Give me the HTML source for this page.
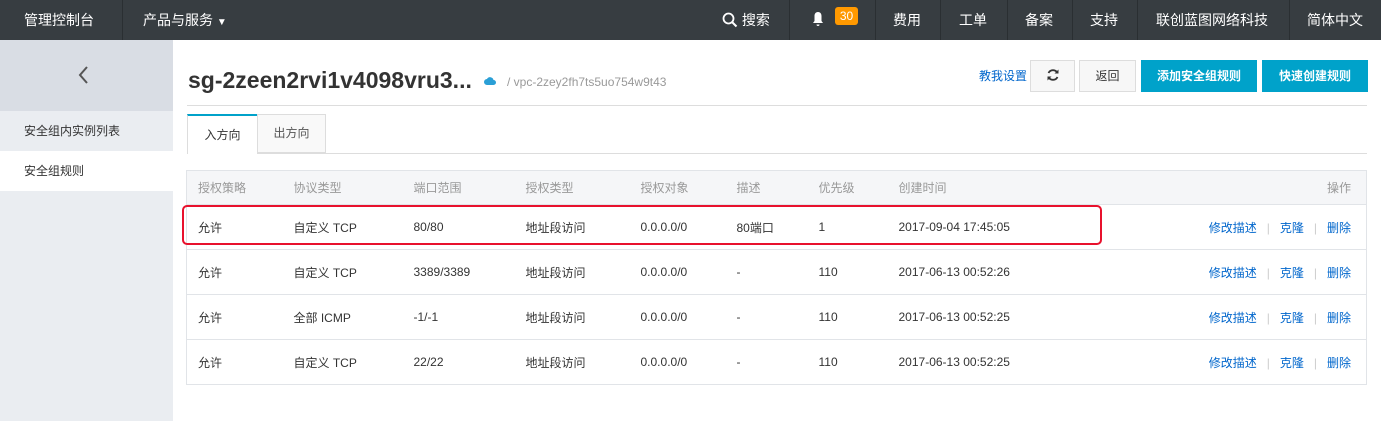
<!DOCTYPE html>
<html><head><meta charset="utf-8"><style>
*{margin:0;padding:0;box-sizing:border-box}
body{width:1381px;height:421px;overflow:hidden;background:#fff;font-family:"Liberation Sans","Noto Sans CJK SC",sans-serif;font-size:12px;color:#333;position:relative}
.nav{position:absolute;left:0;top:0;width:1381px;height:40px;background:#373d41;color:#fff;font-size:14px}
.nav span{position:absolute;top:0;line-height:40px;white-space:nowrap}
.sep{position:absolute;top:0;width:1px;height:40px;background:#2a2f32}
.side{position:absolute;left:0;top:40px;width:173px;height:381px;background:#eaedf1}
.abs{position:absolute;white-space:nowrap}
.btn{position:absolute;top:60px;height:32px;border:1px solid #ddd;background:#f7f7f7;text-align:center;line-height:30px}
.bb{position:absolute;top:60px;height:32px;background:#00a2ca;color:#fff;font-weight:bold;text-align:center;line-height:32px}
table{position:absolute;left:186px;top:170px;width:1181px;border-collapse:collapse;border:1px solid #e1e4e8}
td{height:45px;border-top:1px solid #e1e4e8;padding-left:11px;white-space:nowrap}
tr.h td{height:34px;background:#f5f6f8;color:#999;border-top:none}
.ops{text-align:right;padding-right:15px;color:#06c}
.ops i{font-style:normal;color:#ccc;margin:0 10px}
</style></head><body>
<div class="nav">
<span style="left:24px">管理控制台</span><div class="sep" style="left:122px"></div>
<span style="left:143px">产品与服务 <span style="position:static;font-size:10px">▼</span></span>
<span style="left:722px"><svg width="16" height="16" viewBox="0 0 16 16" style="vertical-align:-3px"><circle cx="6.5" cy="6.5" r="5" fill="none" stroke="#fff" stroke-width="1.8"/><path d="M10 10l4.5 4.5" stroke="#fff" stroke-width="2"/></svg> 搜索</span>
<div class="sep" style="left:789px"></div>
<span style="left:812px"><svg width="12" height="16" viewBox="0 0 12 16" style="vertical-align:-2px"><path d="M6 1c-2.5 0-3.5 2-3.5 4v5L1 12h10l-1.5-2V5C9.5 3 8.5 1 6 1z M4.5 13.5h3a1.5 1.5 0 0 1-3 0z" fill="#fff"/></svg></span>
<span style="left:835px;top:7px;line-height:18px;height:18px;width:23px;background:#ff9900;border-radius:3px;text-align:center;font-size:12px">30</span>
<div class="sep" style="left:875px"></div>
<span style="left:893px">费用</span><div class="sep" style="left:940px"></div>
<span style="left:959px">工单</span><div class="sep" style="left:1007px"></div>
<span style="left:1025px">备案</span><div class="sep" style="left:1072px"></div>
<span style="left:1090px">支持</span><div class="sep" style="left:1137px"></div>
<span style="left:1156px">联创蓝图网络科技</span><div class="sep" style="left:1289px"></div>
<span style="left:1307px">简体中文</span>
</div>
<div class="side">
<div style="height:71px;background:#d9dde4;position:relative"><svg style="position:absolute;left:77px;top:25px" width="12" height="20" viewBox="0 0 12 20"><path d="M10 2L3 10l7 8" fill="none" stroke="#555" stroke-width="2"/></svg></div>
<div style="height:40px;line-height:40px;padding-left:24px">安全组内实例列表</div>
<div style="height:40px;line-height:40px;padding-left:24px;background:#fff">安全组规则</div>
</div>
<div class="abs" style="left:188px;top:67px;font-size:23px;font-weight:bold;color:#333">sg-2zeen2rvi1v4098vru3...</div>
<svg class="abs" style="left:484px;top:76px" width="12" height="9" viewBox="0 0 12 9"><path d="M3 9a3 3 0 0 1 0-6 3.5 3.5 0 0 1 6.5 1A2.5 2.5 0 0 1 9.5 9z" fill="#2a9fd6"/></svg>
<div class="abs" style="left:507px;top:75px;color:#999">/ vpc-2zey2fh7ts5uo754w9t43</div>
<div class="abs" style="left:979px;top:67px;color:#06c">教我设置</div>
<div class="btn" style="left:1030px;width:45px"><svg width="14" height="14" viewBox="0 0 14 14" style="vertical-align:-2px"><path d="M11.5 5A5 5 0 0 0 2.5 5M2.5 9a5 5 0 0 0 9 0" fill="none" stroke="#333" stroke-width="1.8"/><path d="M12.5 1.5v4h-4zM1.5 12.5v-4h4z" fill="#333"/></svg></div>
<div class="btn" style="left:1079px;width:57px">返回</div>
<div class="bb" style="left:1141px;width:116px">添加安全组规则</div>
<div class="bb" style="left:1262px;width:106px">快速创建规则</div>
<div class="abs" style="left:187px;top:105px;width:1180px;height:1px;background:#ddd"></div>
<div class="abs" style="left:187px;top:153px;width:1180px;height:1px;background:#ddd"></div>
<div class="abs" style="left:187px;top:114px;width:70px;height:40px;background:#fff;border-top:2px solid #00a2ca;border-left:1px solid #ddd;text-align:center;line-height:38px">入方向</div>
<div class="abs" style="left:257px;top:114px;width:69px;height:39px;background:#f9f9f9;border:1px solid #ddd;text-align:center;line-height:37px;color:#555">出方向</div>
<table>
<tr class="h"><td style="width:96px">授权策略</td><td style="width:120px">协议类型</td><td style="width:112px">端口范围</td><td style="width:115px">授权类型</td><td style="width:96px">授权对象</td><td style="width:82px">描述</td><td style="width:80px">优先级</td><td style="width:200px">创建时间</td><td class="ops" style="color:#999">操作</td></tr>
<tr><td>允许</td><td>自定义 TCP</td><td>80/80</td><td>地址段访问</td><td>0.0.0.0/0</td><td>80端口</td><td>1</td><td>2017-09-04 17:45:05</td><td class="ops">修改描述<i>|</i>克隆<i>|</i>删除</td></tr>
<tr><td>允许</td><td>自定义 TCP</td><td>3389/3389</td><td>地址段访问</td><td>0.0.0.0/0</td><td>-</td><td>110</td><td>2017-06-13 00:52:26</td><td class="ops">修改描述<i>|</i>克隆<i>|</i>删除</td></tr>
<tr><td>允许</td><td>全部 ICMP</td><td>-1/-1</td><td>地址段访问</td><td>0.0.0.0/0</td><td>-</td><td>110</td><td>2017-06-13 00:52:25</td><td class="ops">修改描述<i>|</i>克隆<i>|</i>删除</td></tr>
<tr><td>允许</td><td>自定义 TCP</td><td>22/22</td><td>地址段访问</td><td>0.0.0.0/0</td><td>-</td><td>110</td><td>2017-06-13 00:52:25</td><td class="ops">修改描述<i>|</i>克隆<i>|</i>删除</td></tr>
</table>
<div class="abs" style="left:182px;top:205px;width:920px;height:40px;border:2.5px solid #e8112d;border-radius:5px"></div>
</body></html>
